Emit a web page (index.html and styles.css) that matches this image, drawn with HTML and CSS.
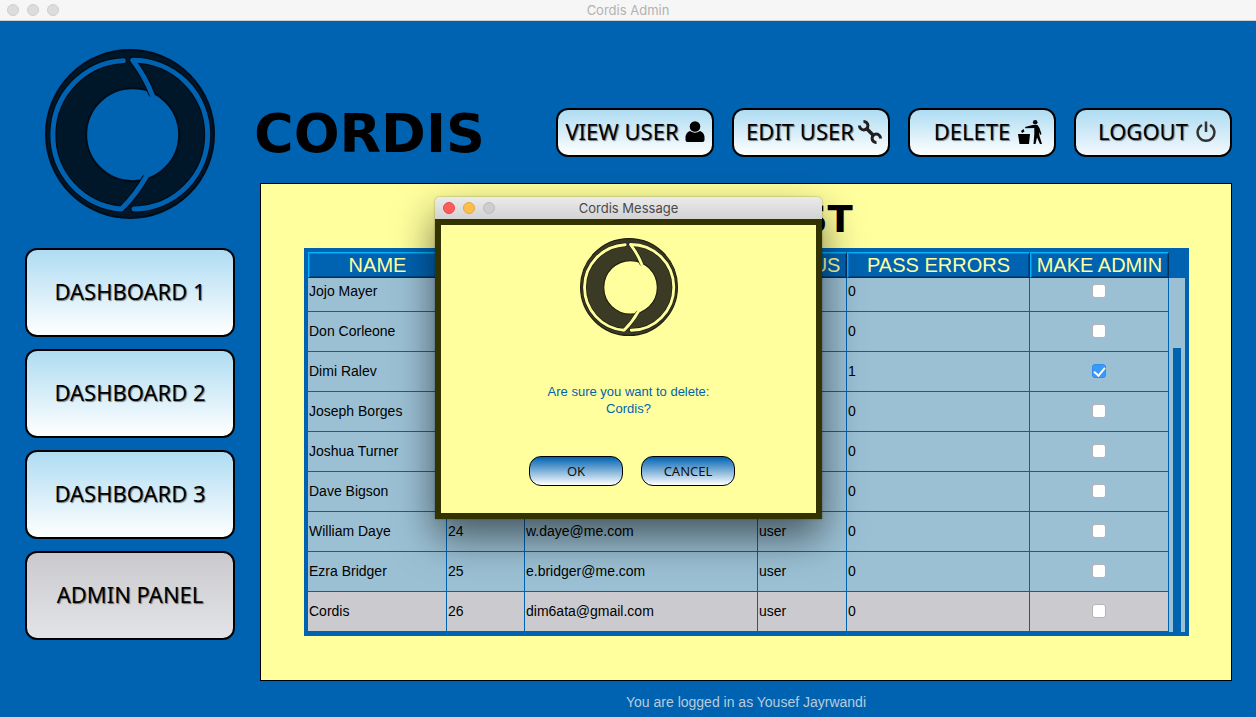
FILE: index.html
```html
<!DOCTYPE html>
<html lang="en">
<head>
<meta charset="utf-8">
<title>Cordis Admin</title>
<link rel="stylesheet" href="styles.css">
</head>
<body>
<svg class="defs" aria-hidden="true">
  <symbol id="ring" viewBox="0 0 512 512">
    <circle class="ring-body" cx="256" cy="256" r="253"/>
    <circle class="ring-hole" cx="264" cy="258" r="140"/>
    <g class="ring-edge">
      <path d="M236 35A224 224 0 0 0 230 482Q273 440 301 391"/>
      <path d="M268 482A224 224 0 0 0 264 34Q302 83 321 133"/>
    </g>
    <g class="ring-cut">
      <path d="M236 35A224 224 0 0 0 230 482Q273 440 305 384"/>
      <path d="M268 482A224 224 0 0 0 264 34Q302 83 323 139"/>
    </g>
  </symbol>
</svg>
<div class="app">
  <div class="titlebar">
    <span class="lights"><i></i><i></i><i></i></span>
    <span class="titlebar-text">Cordis Admin</span>
  </div>
  <div class="content">
    <nav class="sidebar">
      <svg class="logo" role="img" aria-label="Cordis logo"><use href="#ring"/></svg>
      <button class="btn side-btn" type="button">DASHBOARD 1</button>
      <button class="btn side-btn" type="button">DASHBOARD 2</button>
      <button class="btn side-btn" type="button">DASHBOARD 3</button>
      <button class="btn side-btn current" type="button">ADMIN PANEL</button>
    </nav>
    <main class="main">
      <header class="header">
        <h1 class="brand">CORDIS</h1>
        <div class="toolbar">
          <button class="btn tool-btn view" type="button">VIEW USER
            <svg width="20" height="22" viewBox="0 0 20 22"><circle cx="10" cy="5.500" r="5.300"/><path d="M5 10Q10 13.500 15 10Q19.500 11.500 19.500 17V19Q19.500 21 17.500 21H2.500Q.5 21 .5 19V17Q.5 11.500 5 10Z"/></svg></button>
          <button class="btn tool-btn edit" type="button">EDIT USER
            <svg width="24" height="24" viewBox="0 0 24 24"><g fill="none" stroke="#231f20"><path stroke-width="3.500" d="M8 8L16 16"/><path stroke-width="3" d="M5.500 1.500A4.200 4.200 0 1 1 1.500 5.500M22.500 18.500A4.200 4.200 0 1 0 18.500 22.500"/></g></svg></button>
          <button class="btn tool-btn delete" type="button">DELETE
            <svg width="24" height="24" viewBox="0 0 24 24"><circle cx="17.200" cy="2.300" r="2.300"/><path d="M0 14H12L11 24H1.500ZM3 11L5.500 9L6.500 11.500L4 13ZM7 7L14.500 5H19.500L21.500 8L23.500 14L22.500 15L21 12L21.500 16L24 24H22L19 17.500L17.500 24H15.500L16.300 14V8L7.500 8.200Z"/></svg></button>
          <button class="btn tool-btn logout" type="button">LOGOUT
            <svg width="20" height="22" viewBox="0 0 20 22"><g fill="none" stroke="#333" stroke-width="2.500"><path d="M6 4A8.400 8.400 0 1 0 14 4M10 .5V11"/></g></svg></button>
        </div>
      </header>
      <section class="panel">
        <h2 class="panel-title">USER LIST</h2>
        <div class="grid-box">
          <table class="users">
            <colgroup><col class="c-name"><col class="c-id"><col class="c-mail"><col class="c-status"><col class="c-errors"><col class="c-admin"></colgroup>
            <thead><tr><th>NAME</th><th>ID</th><th>EMAIL</th><th>STATUS</th><th>PASS ERRORS</th><th>MAKE ADMIN</th></tr></thead>
            <tbody>
              <tr class="clipped"><td>Jojo Mayer</td><td></td><td></td><td></td><td>0</td><td><input type="checkbox" aria-label="Make Jojo Mayer admin"></td></tr>
              <tr><td>Don Corleone</td><td></td><td></td><td></td><td>0</td><td><input type="checkbox" aria-label="Make Don Corleone admin"></td></tr>
              <tr><td>Dimi Ralev</td><td></td><td></td><td></td><td>1</td><td><input type="checkbox" checked aria-label="Make Dimi Ralev admin"></td></tr>
              <tr><td>Joseph Borges</td><td></td><td></td><td></td><td>0</td><td><input type="checkbox" aria-label="Make Joseph Borges admin"></td></tr>
              <tr><td>Joshua Turner</td><td></td><td></td><td></td><td>0</td><td><input type="checkbox" aria-label="Make Joshua Turner admin"></td></tr>
              <tr><td>Dave Bigson</td><td></td><td></td><td></td><td>0</td><td><input type="checkbox" aria-label="Make Dave Bigson admin"></td></tr>
              <tr><td>William Daye</td><td>24</td><td>w.daye@me.com</td><td>user</td><td>0</td><td><input type="checkbox" aria-label="Make William Daye admin"></td></tr>
              <tr><td>Ezra Bridger</td><td>25</td><td>e.bridger@me.com</td><td>user</td><td>0</td><td><input type="checkbox" aria-label="Make Ezra Bridger admin"></td></tr>
              <tr class="selected"><td>Cordis</td><td>26</td><td>dim6ata@gmail.com</td><td>user</td><td>0</td><td><input type="checkbox" aria-label="Make Cordis admin"></td></tr>
            </tbody>
          </table>
          <div class="track"><div class="thumb"></div></div>
        </div>
      </section>
      <footer class="status">You are logged in as Yousef Jayrwandi</footer>
    </main>
  </div>
</div>
<div class="overlay">
  <div class="dialog" role="dialog" aria-labelledby="dialog-title">
    <div class="dialog-bar">
      <span class="lights"><i class="red"></i><i class="amber"></i><i></i></span>
      <span id="dialog-title">Cordis Message</span>
    </div>
    <div class="dialog-body">
      <svg class="dialog-logo" aria-hidden="true"><use href="#ring"/></svg>
      <p class="message">Are sure you want to delete:<br>Cordis?</p>
      <div class="actions">
        <button class="pill" type="button">OK</button>
        <button class="pill" type="button">CANCEL</button>
      </div>
    </div>
  </div>
</div>
</body>
</html>
```
FILE: styles.css
```css
:root {
  --blue: #0063b1;
  --yellow: #ffff9e;
  --cell: #9bc0d4;
}
* { box-sizing: border-box; }
body {
  margin: 0;
  background: var(--blue);
  font-family: "Liberation Sans", Arial, sans-serif;
  font-size: 14px;
  color: #000;
}
h1, h2, p { margin: 0; }
.defs { position: absolute; width: 0; height: 0; }
.app { min-height: 100vh; display: flex; flex-direction: column; }

/* Window bars */
.titlebar, .dialog-bar {
  display: grid;
  grid-template-columns: 1fr auto 1fr;
  align-items: center;
  font-family: Inter, sans-serif;
  font-size: 13px;
  line-height: 20px;
}
.titlebar {
  background: #f6f6f6;
  border-bottom: 1px solid #d0d0d0;
  color: #b2b2b2;
}
.lights { display: flex; gap: 8px; padding-left: 7px; }
.lights i {
  width: 12px;
  height: 12px;
  border-radius: 50%;
  background: #dcdcdc;
  border: 1px solid #cfcfcf;
}

/* Page frame */
.content { flex: 1; display: flex; gap: 25px; padding: 0 24px 0 25px; }
.sidebar {
  flex: 0 0 210px;
  display: flex;
  flex-direction: column;
  gap: 12px;
  padding-top: 28px;
}
.logo { align-self: center; width: 170px; height: 170px; margin-bottom: 17px; }
.ring-body, .ring-hole { stroke: var(--ring-line, #000c18); stroke-width: 6; }
.ring-body { fill: var(--ring-fill, #001629); }
.ring-hole { fill: var(--ring-back, var(--blue)); }
.ring-edge, .ring-cut { fill: none; stroke-linecap: round; stroke-linejoin: round; }
.ring-edge { stroke: var(--ring-line, #000c18); stroke-width: 22; }
.ring-cut { stroke: var(--ring-back, var(--blue)); stroke-width: 15; }
.main { flex: 1; min-width: 0; display: flex; flex-direction: column; }
.header {
  display: flex;
  align-items: center;
  justify-content: space-between;
  padding: 87px 0 26px;
}
.brand {
  margin-left: -6px;
  padding-top: 2px;
  font: bold 54px/47px "DejaVu Sans", Verdana, sans-serif;
}
.toolbar { display: flex; gap: 18px; }

/* Buttons */
.btn {
  display: flex;
  align-items: center;
  justify-content: center;
  padding: 0 0 3px;
  border: 2px solid #000;
  border-radius: 12px;
  background: linear-gradient(#aedcf2, #fff);
  font: 22px/24px "Noto Sans", Tahoma, sans-serif;
  color: #000;
  text-shadow: 1px 1px 1px rgba(0, 0, 0, .5);
  white-space: nowrap;
}
.btn svg { margin-top: 2px; }
.side-btn { height: 89px; }
.current { background: linear-gradient(#cacace, #e3e4e8); }
.tool-btn { width: 158px; height: 49px; gap: 6px; }
.edit { gap: 4px; padding-left: 6px; }
.delete { width: 148px; gap: 8px; padding-left: 12px; }
.logout { gap: 8px; padding-left: 8px; background: linear-gradient(#aedcf2, #f2f8fd); }

/* User list */
.panel {
  flex: 1;
  background: var(--yellow);
  border: 1px solid #000;
  padding: 8px 42px 44px 43px;
}
.panel-title {
  font: bold 37px/56px "DejaVu Sans", Verdana, sans-serif;
  text-align: center;
}
.grid-box { display: flex; border: 4px solid var(--blue); background: var(--blue); }
.users { flex: 1; border-collapse: separate; border-spacing: 0; table-layout: fixed; }
.c-name, .c-admin { width: 139px; }
.c-id { width: 78px; }
.c-mail { width: 233px; }
.c-status { width: 89px; }
.c-errors { width: 183px; }
.users th {
  height: 26px;
  padding: 0;
  border: 1px solid;
  border-color: #00b4ff #00305a #00305a #00b4ff;
  box-shadow: inset 1px 1px #0084e0, inset -1px -1px #004780;
  font-size: 20px;
  line-height: 24px;
  font-weight: normal;
  color: var(--yellow);
  white-space: nowrap;
}
.users td {
  height: 40px;
  padding: 0 1px 2px;
  background: var(--cell);
  border: solid var(--blue);
  border-width: 0 1px 1px 0;
  line-height: 20px;
}
.users td:last-child { text-align: center; }
.users .clipped td { height: 34px; padding-bottom: 8px; }
.users .selected td { background: #cbcbcf; }
.users input {
  appearance: none;
  display: block;
  width: 14px;
  height: 14px;
  margin: 0 auto;
  border: 1px solid #b4b4b4;
  border-radius: 3px;
  background: #fff;
}
.users input:checked { background: #3b99fc; border-color: #2f8df0; }
.users input:checked::after {
  content: "";
  display: block;
  width: 5px;
  height: 9px;
  margin: 0 auto;
  border: solid #fff;
  border-width: 0 2px 2px 0;
  transform: rotate(40deg);
}
.track {
  flex: 0 0 16px;
  margin-top: 26px;
  padding: 70px 4px 0;
  display: flex;
  background: var(--cell);
}
.thumb { flex: 1; background: var(--blue); }
.status {
  padding: 11px 0 5px;
  line-height: 20px;
  text-align: center;
  color: #b9cbdc;
}

/* Message window */
.overlay {
  position: absolute;
  inset: 0;
  display: flex;
  justify-content: center;
  align-items: flex-start;
  padding: 197px 0 0 1px;
}
.dialog {
  width: 387px;
  border-radius: 5px 5px 0 0;
  box-shadow: 0 18px 40px rgba(0, 0, 0, .55), 0 0 2px rgba(0, 0, 0, .4);
}
.dialog-bar {
  height: 22px;
  border-radius: 5px 5px 0 0;
  background: linear-gradient(#ebebeb, #d2d2d2);
  color: #4a4a4a;
}
.dialog-bar .lights { padding-left: 8px; }
.dialog-bar .lights i { background: #cdcdcd; border-color: #bcbcbc; }
.dialog-bar .lights .red { background: #ff5b5b; border-color: #e64848; }
.dialog-bar .lights .amber { background: #ffbd4c; border-color: #e5a53c; }
.dialog-body {
  display: flex;
  flex-direction: column;
  align-items: center;
  padding: 13px 0 27px;
  border: 6px solid #333300;
  background: var(--yellow);
}
.dialog-logo {
  --ring-fill: #3b3a24;
  --ring-line: #1f1f10;
  --ring-back: var(--yellow);
  width: 98px;
  height: 98px;
}
.message {
  margin: 47px 0 39px;
  font-size: 13px;
  line-height: 17px;
  text-align: center;
  color: var(--blue);
}
.actions { display: flex; gap: 18px; padding-left: 7px; }
.pill {
  width: 94px;
  height: 30px;
  padding: 0;
  border: 1px solid #000;
  border-radius: 12px;
  background: linear-gradient(#0063b1, #fff);
  font: 13px/16px "Noto Sans", Tahoma, sans-serif;
  color: #111;
}
```
